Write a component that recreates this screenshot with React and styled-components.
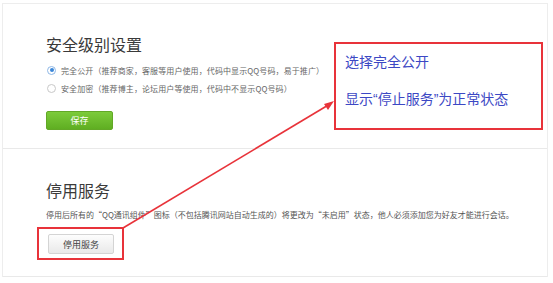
import React from 'react';
import styled, { createGlobalStyle } from 'styled-components';

const GlobalStyle = createGlobalStyle`
  html, body {
    margin: 0;
    padding: 0;
    background: #fff;
  }
  body {
    font-family: "Noto Sans CJK SC", "Noto Sans", sans-serif;
    color: #333;
  }
`;

const Page = styled.div`
  position: relative;
  width: 553px;
  height: 283px;
  overflow: hidden;
  padding: 3px 5px 0 2px;
  box-sizing: border-box;
`;

const Panel = styled.div`
  border: 1px solid #ededed;
  border-bottom: none;
`;

const Section = styled.div`
  height: ${(p) => p.h}px;
  padding: ${(p) => p.top}px 0 0 43px;
  box-sizing: border-box;
  border-bottom: 1px solid #e9e9e9;
  display: flex;
  flex-direction: column;
  align-items: flex-start;
`;

const Title = styled.h2`
  margin: 0;
  font-size: 16px;
  line-height: 20px;
  font-weight: 400;
  color: #3a3a3a;
`;

const RadioList = styled.div`
  margin-top: 7px;
  display: flex;
  flex-direction: column;
`;

const RadioRow = styled.label`
  display: flex;
  align-items: center;
  height: 18px;
  font-size: 8px;
  letter-spacing: 0.1px;
  color: #666;
  gap: 5px;
`;

const RadioDot = styled.span`
  width: 9px;
  height: 9px;
  border-radius: 50%;
  border: 1px solid ${(p) => (p.checked ? '#8fb8e6' : '#c8c8c8')};
  box-sizing: border-box;
  background: #fff;
  display: flex;
  align-items: center;
  justify-content: center;
  margin-left: 1px;

  &::after {
    content: '';
    width: 4px;
    height: 4px;
    border-radius: 50%;
    background: ${(p) => (p.checked ? '#3a86d8' : 'transparent')};
  }
`;

const SaveButton = styled.button`
  margin-top: 14px;
  width: 67px;
  height: 19px;
  border: 1px solid #62a826;
  border-radius: 2px;
  background: linear-gradient(#7ccb3a, #5fae22);
  color: #fff;
  font-family: inherit;
  font-size: 9px;
  padding: 0;
`;

const Desc = styled.p`
  margin: 8px 0 0;
  font-size: 8px;
  line-height: 14px;
  color: #555;
  white-space: nowrap;
`;

const StopButton = styled.button`
  margin-top: 12px;
  margin-left: 2px;
  width: 66px;
  height: 20px;
  border: 1px solid #d4d4d4;
  border-radius: 2px;
  background: linear-gradient(#fdfdfd, #e9e9e9);
  color: #444;
  font-family: inherit;
  font-size: 9px;
  padding: 0;
`;

const Mark = styled.div`
  position: absolute;
  left: ${(p) => p.x}px;
  top: ${(p) => p.y}px;
  width: ${(p) => p.w}px;
  height: ${(p) => p.h}px;
  border: 2px solid #e8333a;
  box-sizing: border-box;
  pointer-events: none;
`;

const Note = styled(Mark)`
  background: #fff;
  padding: 7px 0 0 9px;
  display: flex;
  flex-direction: column;
  gap: 17px;
`;

const NoteLine = styled.div`
  font-size: 14px;
  line-height: 20px;
  color: #3c48c4;
  white-space: nowrap;
`;

const Quote = styled.span`
  font-family: "Liberation Sans", sans-serif;
`;

const ArrowLayer = styled.svg`
  position: absolute;
  left: 0;
  top: 0;
  pointer-events: none;
`;

export default function App() {
  return (
    <>
      <GlobalStyle />
      <Page>
        <Panel>
          <Section h={145} top={30}>
            <Title>安全级别设置</Title>
            <RadioList>
              <RadioRow>
                <RadioDot checked />
                完全公开（推荐商家，客服等用户使用，代码中显示QQ号码，易于推广）
              </RadioRow>
              <RadioRow>
                <RadioDot />
                安全加密（推荐博主，论坛用户等使用，代码中不显示QQ号码）
              </RadioRow>
            </RadioList>
            <SaveButton>保存</SaveButton>
          </Section>
          <Section h={128} top={31}>
            <Title>停用服务</Title>
            <Desc>
              停用后所有的“QQ通讯组件”图标（不包括腾讯网站自动生成的）将更改为“未启用”状态，他人必须添加您为好友才能进行会话。
            </Desc>
            <StopButton>停用服务</StopButton>
          </Section>
        </Panel>

        <ArrowLayer width="553" height="283">
          <line x1="123" y1="228" x2="330" y2="104" stroke="#e8333a" strokeWidth="1.6" />
          <polygon points="334,101 324,104 328,110" fill="#e8333a" />
        </ArrowLayer>
        <Mark x={37} y={227} w={87} h={33} />
        <Note x={334} y={42} w={209} h={88}>
          <NoteLine>选择完全公开</NoteLine>
          <NoteLine>
            显示<Quote>“</Quote>停止服务<Quote>”</Quote>为正常状态
          </NoteLine>
        </Note>
      </Page>
    </>
  );
}
